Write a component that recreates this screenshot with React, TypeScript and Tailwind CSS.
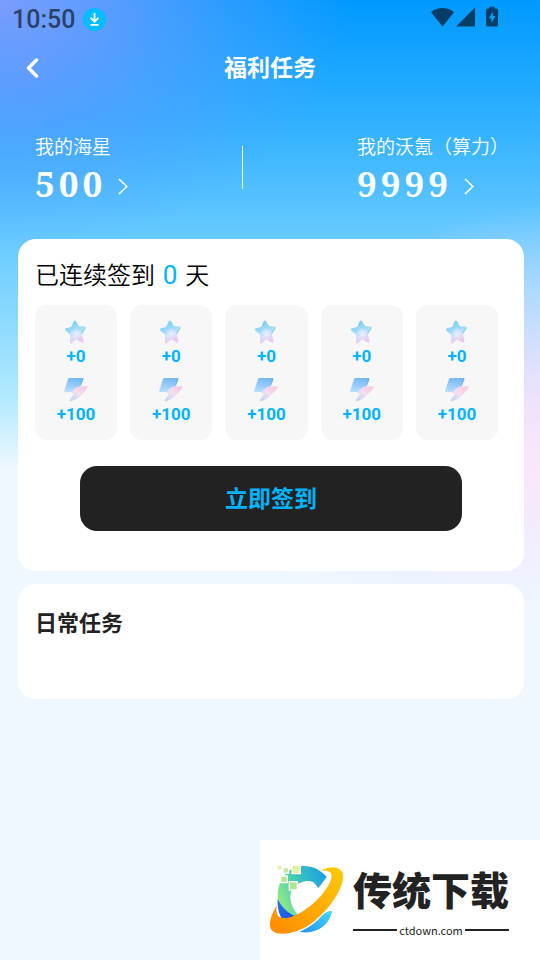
import React from "react";

const rewards = [
  { stars: "+0", power: "+100" },
  { stars: "+0", power: "+100" },
  { stars: "+0", power: "+100" },
  { stars: "+0", power: "+100" },
  { stars: "+0", power: "+100" },
];

function StatusBar() {
  return (
    <div className="flex h-[38px] items-center justify-between pr-[41px] pl-3">
      <div className="flex items-center gap-2">
        <span className="pt-px font-['Roboto',sans-serif] text-[25px] leading-[37px] font-medium text-black/60">10:50</span>
        <svg width="23" height="23" viewBox="0 0 23 23" aria-hidden="true">
          <circle cx="11.5" cy="11.5" r="11.5" fill="#05bcff" />
          <path d="M11.5 5v8.4M7.6 9.8l3.9 3.9 3.9-3.9M7.5 16.8h8" fill="none" stroke="#fff" strokeWidth="1.8" />
        </svg>
      </div>
      <svg className="-mt-1" width="68" height="22" viewBox="0 0 68 22" fill="#000" fillOpacity=".6" aria-hidden="true">
        <path d="M0 6.2C6.500 .7 16.500 .7 23 6.200L11.500 20.500z" />
        <path d="M44 1.500V20.500H25z" />
        <path
          fillRule="evenodd"
          d="M58.500 .8h5v1.700h2q1.500 0 1.500 1.500v15q0 1.500-1.500 1.500h-9q-1.500 0-1.500-1.500v-15q0-1.500 1.500-1.500h2zM61.800 5.500l-4 7h2.700v4.500l4-7h-2.700z"
        />
      </svg>
    </div>
  );
}

function Balance({ label, value }: { label: string; value: string }) {
  return (
    <div className="text-white">
      <p className="text-[19px] leading-6 font-[350]">{label}</p>
      <a href="#detail" className="flex items-center gap-3 leading-[48px]">
        <span className="font-['Noto_Serif','DejaVu_Serif_Condensed','DejaVu_Serif',serif] text-[35px] font-bold tracking-[4px]">
          {value}
        </span>
        <svg className="mt-1" width="10" height="17" viewBox="0 0 10 17" fill="none" stroke="#fff" strokeWidth="1.500" aria-hidden="true">
          <path d="M1 1l7.800 7.500L1 16" />
        </svg>
      </a>
    </div>
  );
}

function StarIcon() {
  return (
    <svg width="24" height="26" viewBox="0 0 24 26" aria-hidden="true">
      <defs>
        <linearGradient id="starFill" x1=".2" y1="0" x2=".6" y2="1">
          <stop offset="0" stopColor="#74cdf5" />
          <stop offset=".45" stopColor="#9fdaf8" />
          <stop offset=".68" stopColor="#d6dffa" />
          <stop offset="1" stopColor="#f4c3ea" />
        </linearGradient>
        <radialGradient id="starGlow">
          <stop offset="0" stopColor="#eaeeff" />
          <stop offset="1" stopColor="#eaeeff" stopOpacity="0" />
        </radialGradient>
      </defs>
      <path
        d="M9.800 2q1.200-1.200 2.200.3l3 5 6 .2q1.900.5.6 2.100l-3.800 4.900 1.700 7.800q0 2-1.700 1.300L12.200 20.500 7.800 24.200q-1.900 1-2-.8l.5-7.700L1.200 11.500q-1-1.600.7-2.200l5.300-1.200z"
        fill="url(#starFill)"
      />
      <circle cx="12" cy="14.500" r="6" fill="url(#starGlow)" />
      <path d="M21 9.500l-3.500 5" stroke="#73d8ee" strokeWidth="1.200" />
    </svg>
  );
}

function PowerIcon() {
  return (
    <svg width="24" height="25" viewBox="0 0 24 25" aria-hidden="true">
      <defs>
        <linearGradient id="powerTop" x1=".5" y1="0" x2=".3" y2="1">
          <stop offset="0" stopColor="#72b8f5" />
          <stop offset="1" stopColor="#b9deff" />
        </linearGradient>
        <linearGradient id="powerLow" x1="1" y1="0" x2="0" y2="1">
          <stop offset="0" stopColor="#f9c5e0" />
          <stop offset=".5" stopColor="#f6deee" />
          <stop offset="1" stopColor="#b6d6f8" />
        </linearGradient>
      </defs>
      <path d="M4 2Q4.500 1 5.500 1h13.200q1 0 .6 1.200L16.500 9.500 10.500 15H1Q-.1 15 .2 13.800z" fill="url(#powerTop)" />
      <path d="M8 15q3-5 7-5.500l7.800-.2q1.300.2.4 1.600-6 9.500-15 13-2.900 1-2.400-.8l4.200-6.600-3-.8z" fill="url(#powerLow)" />
      <path d="M19 2l-2.200 6" fill="none" stroke="#6f9fe8" strokeWidth=".7" />
    </svg>
  );
}

function SiteMark() {
  return (
    <svg width="90" height="90" viewBox="0 0 270 270" aria-hidden="true">
      <defs>
        <linearGradient id="arcFill" x1="0" y1=".5" x2="1" y2="0">
          <stop offset="0" stopColor="#8ce888" />
          <stop offset=".4" stopColor="#3fc9b5" />
          <stop offset="1" stopColor="#1597ed" />
        </linearGradient>
        <linearGradient id="orbitFill" x1="1" y1="0" x2="0" y2="1">
          <stop offset="0" stopColor="#ffcb05" />
          <stop offset="1" stopColor="#ff8900" />
        </linearGradient>
        <linearGradient id="tailFill" x1="0" y1="1" x2="1" y2="0">
          <stop offset="0" stopColor="#218fed" />
          <stop offset="1" stopColor="#47dbff" />
        </linearGradient>
        <linearGradient id="deepFill" x1="0" y1="0" x2="1" y2="1">
          <stop offset="0" stopColor="#2277f5" />
          <stop offset="1" stopColor="#1e43df" />
        </linearGradient>
      </defs>
      <path
        d="M185 66C165 42 135 30 105 34 65 40 40 75 38 120 37 165 48 198 70 204L108 188C80 165 65 120 86 98 104 78 132 73 148 84L160 99z"
        fill="url(#arcFill)"
      />
      <path d="M38 132C50 157 72 182 108 188L72 206C46 200 36 165 38 132z" fill="url(#deepFill)" />
      <path d="M104 230C145 240 194 215 201 168 187 166 176 177 166 187 148 207 130 219 104 230z" fill="url(#tailFill)" />
      <path
        d="M165 47C200 29 232 34 234 62 236 97 199 155 150 197 100 237 35 247 19 224 8 207 21 174 36 151 31 175 37 190 58 189 90 190 139 155 168 122 192 94 209 62 194 51 186 46 177 46 165 47z"
        fill="url(#orbitFill)"
      />
      <g stroke="#fff" strokeWidth="4">
        <path d="M36 30h15v15H36z" fill="#eaf1a2" />
        <path d="M54 38h17v17H54z" fill="#c2e79d" />
        <path d="M81 30h25v26H81z" fill="#e4f2a0" />
        <path d="M47 63h20v20H47z" fill="#b4e693" />
        <path d="M73 80h24v25H73z" fill="#b0e58d" />
      </g>
    </svg>
  );
}

export default function App() {
  return (
    <div className="relative min-h-screen overflow-hidden bg-[#f0f8ff] font-['Roboto','Noto_Sans_CJK_SC',sans-serif]">
      <div
        className="absolute inset-x-0 top-0 h-[640px] bg-[radial-gradient(ellipse_350px_250px_at_0_0,#7a9cff_0%,#669cffdd_32%,#56a0ff88_62%,#50a0ff00_100%),radial-gradient(ellipse_270px_270px_at_100%_475px,#fae7fa_0%,#f3e1fcee_28%,#dddefca0_60%,#dde4ff00_100%),linear-gradient(180deg,#0099ff_0px,#1aa6ff_68px,#31b1ff_125px,#5dc5ff_215px,#8cdaff_320px,#b3eaff_400px,#f0f8ff_470px)]"
        aria-hidden="true"
      />
      <div
        className="absolute inset-x-0 top-[475px] h-[165px] bg-[linear-gradient(180deg,#f0f8ff00_0px,#f0f8ff88_70px,#f0f8ff_150px)]"
        aria-hidden="true"
      />
      <div className="relative">
        <StatusBar />
        <header className="grid h-[60px] grid-cols-[60px_1fr_60px] items-center">
          <button type="button" aria-label="返回" className="flex h-full items-center pl-[26px]">
            <svg width="13" height="20" viewBox="0 0 13 20" fill="none" stroke="#fff" strokeWidth="3.500" strokeLinecap="round" strokeLinejoin="round" aria-hidden="true">
              <path d="M10.500 2L2.500 10l8 8" />
            </svg>
          </button>
          <h1 className="pt-[2px] text-center text-[23px] leading-8 font-bold text-white">福利任务</h1>
        </header>

        <section className="flex items-start justify-between pt-[38px] pr-[31px] pl-[35px]">
          <Balance label="我的海星" value="500" />
          <div className="mt-[10px] h-[43px] w-px bg-white/90" />
          <Balance label="我的沃氪（算力）" value="9999" />
        </section>

        <main className="mt-[31px] mr-4 ml-[18px] flex flex-col gap-[13px]">
          <section className="rounded-[18px] bg-white pt-5 pb-10">
            <h2 className="h-8 px-[17px] text-2xl leading-8 font-[350] text-black">
              已连续签到 <span className="mx-0.5 text-[26px] font-normal text-[#00b4ff]">0</span> 天
            </h2>
            <ul className="mt-[14px] mr-[26px] ml-[17px] grid grid-cols-5 gap-[13px]">
              {rewards.map((reward, index) => (
                <li
                  key={index}
                  className="flex h-[135px] flex-col items-center rounded-xl bg-[#f7f7f7] pt-[14px] text-[17px] leading-5 font-bold text-[#00b4ff]"
                >
                  <StarIcon />
                  <span className="mt-px">{reward.stars}</span>
                  <span className="mt-[11px]">
                    <PowerIcon />
                  </span>
                  <span className="mt-[2px]">{reward.power}</span>
                </li>
              ))}
            </ul>
            <div className="mt-[26px] px-[62px]">
              <button type="button" className="h-[65px] w-full rounded-[17px] bg-[#222] pt-1 text-[23px] font-bold text-[#00b4ff]">
                立即签到
              </button>
            </div>
          </section>

          <section className="h-[115px] rounded-[18px] bg-white px-[17px] pt-6">
            <h2 className="text-[22px] leading-8 font-bold text-[#222]">日常任务</h2>
          </section>
        </main>
      </div>

      <aside className="absolute right-0 bottom-0 flex h-[120px] w-[280px] items-start bg-white pt-[15px] pl-[5px]">
        <SiteMark />
        <div className="-ml-[2px] w-[156px] pt-[13px] text-[#222]">
          <p className="text-[39px] leading-[48px] font-black whitespace-nowrap">传统下载</p>
          <p className="flex items-center gap-[2px] font-['Noto_Sans_CJK_SC',sans-serif] text-[11px] leading-7">
            <span className="h-[2px] flex-1 bg-[#222]" />
            ctdown.com
            <span className="h-[2px] flex-1 bg-[#222]" />
          </p>
        </div>
      </aside>
    </div>
  );
}
